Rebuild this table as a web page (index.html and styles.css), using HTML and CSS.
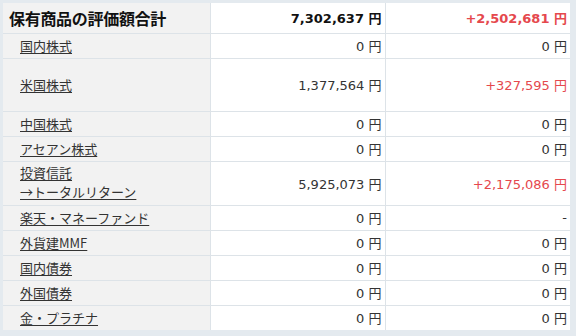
FILE: index.html
```html
<!DOCTYPE html>
<html lang="ja">
<head>
<meta charset="utf-8">
<link rel="stylesheet" href="styles.css">
</head>
<body>
<div class="frame">
<table class="tbl">
  <colgroup><col class="c1"><col class="c2"><col class="c3"></colgroup>
  <tr class="head h30">
    <th>保有商品の評価額合計</th>
    <td class="num">7,302,637 円</td>
    <td class="num red">+2,502,681 円</td>
  </tr>
  <tr class="h25"><th class="sub"><a>国内株式</a></th><td class="num">0 円</td><td class="num">0 円</td></tr>
  <tr class="h53"><th class="sub"><a>米国株式</a></th><td class="num">1,377,564 円</td><td class="num red">+327,595 円</td></tr>
  <tr class="h25"><th class="sub"><a>中国株式</a></th><td class="num">0 円</td><td class="num">0 円</td></tr>
  <tr class="h25"><th class="sub"><a>アセアン株式</a></th><td class="num">0 円</td><td class="num">0 円</td></tr>
  <tr class="h44"><th class="sub two"><a>投資信託</a><br><a class="small">→トータルリターン</a></th><td class="num">5,925,073 円</td><td class="num red">+2,175,086 円</td></tr>
  <tr class="h25"><th class="sub"><a>楽天・マネーファンド</a></th><td class="num">0 円</td><td class="num">-</td></tr>
  <tr class="h25"><th class="sub"><a>外貨建MMF</a></th><td class="num">0 円</td><td class="num">0 円</td></tr>
  <tr class="h25"><th class="sub"><a>国内債券</a></th><td class="num">0 円</td><td class="num">0 円</td></tr>
  <tr class="h25"><th class="sub"><a>外国債券</a></th><td class="num">0 円</td><td class="num">0 円</td></tr>
  <tr class="h25"><th class="sub"><a>金・プラチナ</a></th><td class="num">0 円</td><td class="num">0 円</td></tr>
</table>
</div>
</body>
</html>
```
FILE: styles.css
```css
html, body {
  margin: 0;
  padding: 0;
  background: #e4eaef;
}
.frame {
  width: 576px;
  height: 336px;
  box-sizing: border-box;
  padding: 3px 6px 6px 3px;
  background: #e4eaef;
}
.tbl {
  border-collapse: collapse;
  table-layout: fixed;
  width: 567px;
  font-family: "DejaVu Sans", "Noto Sans CJK JP", sans-serif;
  font-size: 13px;
  color: #333;
}
.c1 { width: 207px; }
.c2 { width: 175px; }
.c3 { width: 185px; }
.tbl th, .tbl td {
  padding: 0;
  border-top: 1px solid #dde3e8;
  border-left: 1px solid #dde3e8;
  vertical-align: middle;
}
.tbl tr:first-child th, .tbl tr:first-child td { border-top: none; }
.tbl th {
  background: #f2f2f2;
  text-align: left;
  font-weight: normal;
  border-left: none;
}
.tbl td { background: #fff; }
.head th {
  font-family: "Noto Sans CJK JP", sans-serif;
  font-weight: bold;
  font-size: 16px;
  color: #111;
  padding-left: 6px;
  letter-spacing: -0.3px;
}
.head td {
  font-weight: bold;
  font-size: 13px;
  color: #111;
}
.head td.red { color: #e5484d; }
.sub { padding-left: 17px !important; }
.sub a {
  font-family: "Noto Sans CJK JP", sans-serif;
  font-size: 13px;
  color: #333;
  text-decoration: underline;
  text-underline-offset: 2px;
  line-height: 18px;
}
.two { line-height: 18px; }
.num {
  text-align: right;
  padding-right: 3px !important;
}
.red { color: #e5484d; }
.h30 { height: 30px; }
.h25 { height: 25px; }
.h53 { height: 53px; }
.h44 { height: 44px; }
```
